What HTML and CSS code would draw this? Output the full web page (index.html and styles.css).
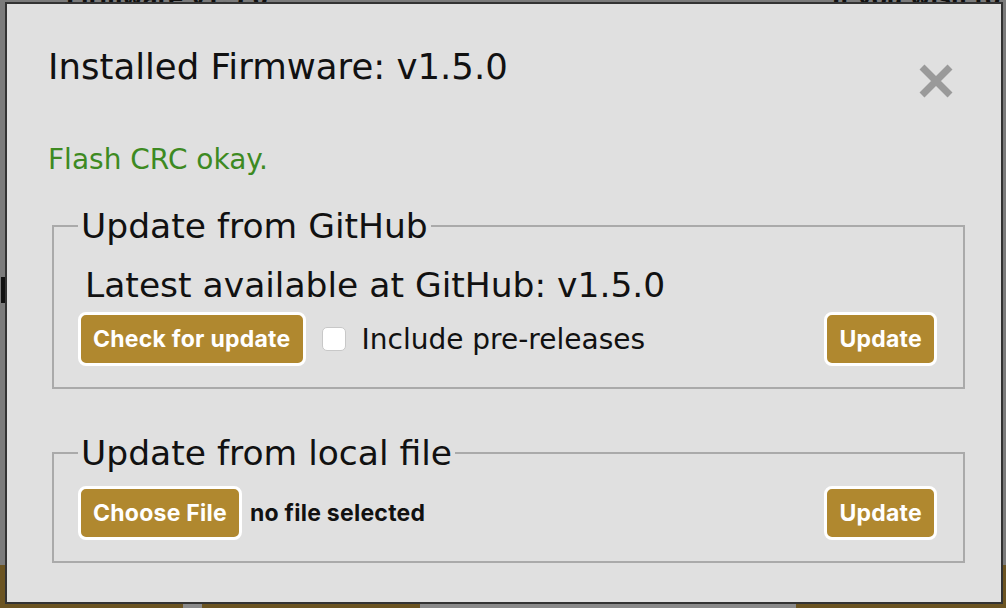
FILE: index.html
```html
<!DOCTYPE html>
<html>
<head>
<meta charset="utf-8">
<title>Firmware</title>
<link rel="stylesheet" href="styles.css">
</head>
<body>
<div class="page">
  <div class="page-top">
    <span class="ghost ghost-left">Firmware v1.5.0</span>
    <span class="ghost ghost-right">If you wish to</span>
  </div>
  <div class="page-mid"><span class="side-mark"></span></div>
  <div class="page-foot">
    <span class="seg brown w1"></span>
    <span class="seg grey w2"></span>
    <span class="seg brown w3"></span>
    <span class="seg grey w4"></span>
    <span class="seg brown w5"></span>
  </div>
</div>
<div class="modal">
  <div class="modal-head">
    <h1 class="title">Installed Firmware: v1.5.0</h1>
    <button class="close" aria-label="Close">
      <svg width="36" height="36" viewBox="0 0 36 36"><path d="M4 4 L32 32 M32 4 L4 32" stroke="#9a9a9a" stroke-width="7" fill="none"/></svg>
    </button>
  </div>
  <p class="status">Flash CRC okay.</p>
  <fieldset class="box box-github">
    <legend class="box-legend">Update from GitHub</legend>
    <div class="latest">Latest available at GitHub: v1.5.0</div>
    <div class="row">
      <button class="btn">Check for update</button>
      <label class="check"><input type="checkbox" class="check-input"><span>Include pre-releases</span></label>
      <button class="btn btn-right">Update</button>
    </div>
  </fieldset>
  <fieldset class="box box-local">
    <legend class="box-legend">Update from local file</legend>
    <div class="row">
      <button class="btn">Choose File</button>
      <span class="file-name">no file selected</span>
      <button class="btn btn-right">Update</button>
    </div>
  </fieldset>
</div>
</body>
</html>
```
FILE: styles.css
```css
html, body {
  margin: 0;
  padding: 0;
  width: 1006px;
  height: 608px;
  overflow: hidden;
}
body {
  background: #7b7b7b;
  font-family: "DejaVu Sans", Verdana, sans-serif;
  position: relative;
}
.page {
  display: flex;
  flex-direction: column;
  height: 608px;
}
.page-top {
  height: 20px;
  display: flex;
  justify-content: space-between;
  padding: 0 6px 0 66px;
  margin-top: -14px;
}
.ghost {
  font-size: 22px;
  color: #111;
  font-weight: bold;
}
.page-mid {
  flex: 1;
  position: relative;
}
.side-mark {
  position: absolute;
  left: 1px;
  top: 271px;
  width: 4px;
  height: 26px;
  background: #111;
}
.page-foot {
  height: 43px;
  display: flex;
}
.seg { display: block; height: 100%; }
.brown { background: #6b5422; }
.grey { background: #8a8a8a; align-self: flex-end; height: 5px; }
.w1 { width: 183px; }
.w2 { width: 19px; }
.w3 { width: 218px; }
.w4 { width: 376px; }
.w5 { flex: 1; }

.modal {
  position: absolute;
  left: 5px;
  top: 2px;
  width: 998px;
  height: 602px;
  box-sizing: border-box;
  border: 2px solid #333;
  background: #e0e0e0;
  padding: 42px 36px 0 41px;
}
.modal-head {
  display: flex;
  justify-content: space-between;
  align-items: flex-start;
}
.title {
  margin: 0;
  font-size: 35.5px;
  font-weight: normal;
  line-height: normal;
  color: #111;
}
.close {
  margin: 17px 11px 0 0;
  padding: 0;
  border: 0;
  background: none;
  width: 36px;
  height: 36px;
  display: flex;
}
.status {
  margin: 44px 0 0 0;
  font-size: 28px;
  line-height: normal;
  color: #3d8a22;
}
.box {
  margin: 30px 0 0 4px;
  border: 2px solid #aaa;
  padding: 0 26px 21px 24px;
  min-width: 0;
}
.box-local {
  margin-top: 44px;
}
.box-legend {
  font-size: 34.5px;
  line-height: normal;
  padding: 0 3px;
  color: #111;
}
.latest {
  font-size: 34.5px;
  line-height: normal;
  padding-left: 7px;
  margin-top: 19px;
  color: #111;
}
.row {
  display: flex;
  align-items: center;
  gap: 16px;
  margin-top: 7px;
}
.box-local .row {
  margin-top: 13px;
}
.btn {
  height: 54px;
  box-sizing: border-box;
  background: #b0882f;
  color: #fff;
  border: 3px solid #fff;
  border-radius: 8px;
  padding: 0 12px;
  font-family: Inter, "Liberation Sans", sans-serif;
  font-weight: 700;
  font-size: 23px;
  letter-spacing: 0.25px;
}
.btn-right {
  margin-left: auto;
}
.check {
  display: flex;
  align-items: center;
  gap: 16px;
  font-size: 28px;
  color: #111;
}
.check-input {
  appearance: none;
  margin: 0;
  width: 24px;
  height: 24px;
  background: #fff;
  border: 1px solid #c8c8c8;
  border-radius: 5px;
}
.file-name {
  font-family: Inter, "Liberation Sans", sans-serif;
  font-weight: 700;
  font-size: 23px;
  letter-spacing: 0.25px;
  color: #111;
  margin-left: -8px;
}
```
